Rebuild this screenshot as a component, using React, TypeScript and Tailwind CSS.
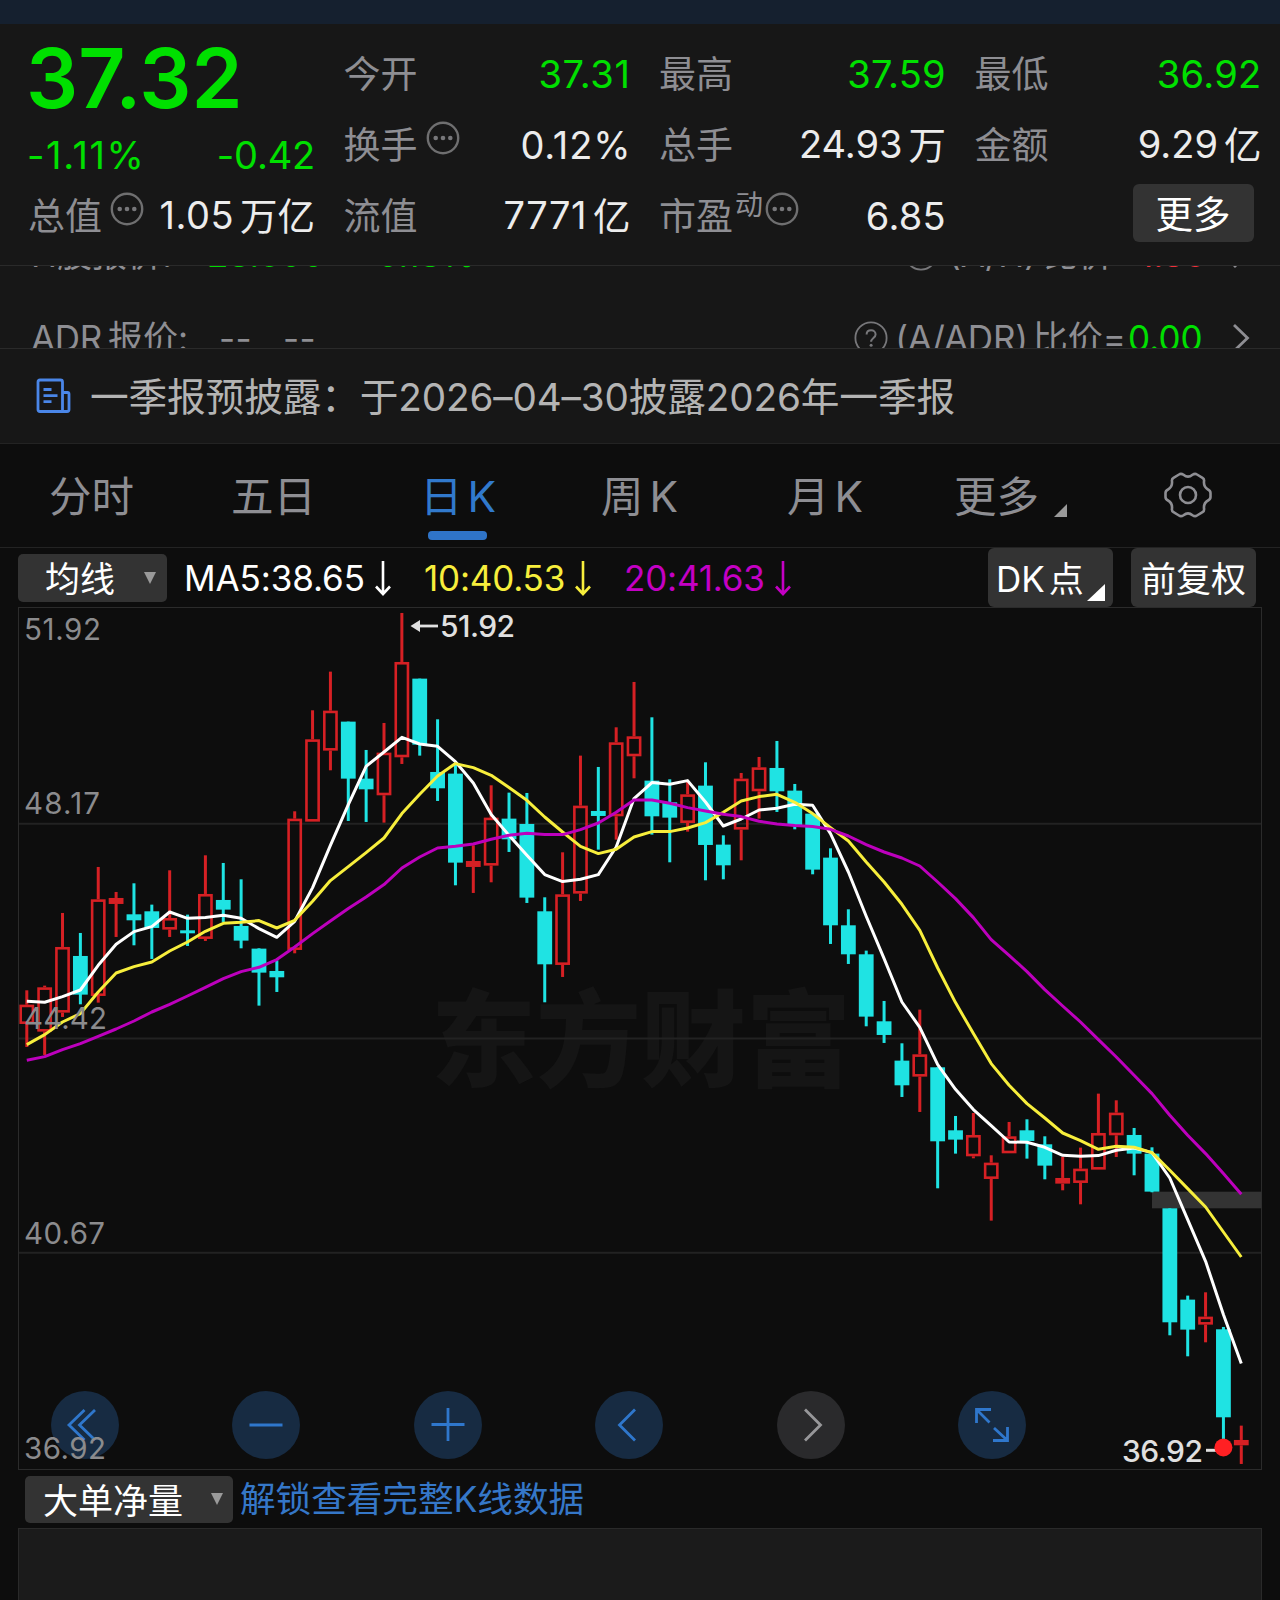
import React from "react";

type Candle = [kind: "u" | "d", high: number, top: number, bottom: number, low: number];

// Candle geometry in thirds of a pixel, measured from BASE_Y.
const CANDLES: Candle[] = [
  ["u", 1170, 1213, 1271, 1340], ["u", 1156, 1161, 1294, 1364], ["u", 938, 1040, 1237, 1250],
  ["d", 998, 1067, 1183, 1212], ["u", 800, 897, 1187, 1207], ["u", 875, 893, 911, 1010],
  ["d", 849, 942, 960, 1035], ["d", 913, 933, 983, 1076], ["u", 810, 953, 988, 1010],
  ["d", 943, 990, 999, 1037], ["u", 765, 881, 1016, 1022], ["d", 788, 899, 928, 965],
  ["d", 837, 977, 1021, 1044], ["d", 1044, 1045, 1117, 1216], ["d", 1080, 1112, 1131, 1175],
  ["u", 633, 655, 1049, 1059], ["u", 330, 417, 664, 664], ["u", 214, 331, 451, 510],
  ["d", 364, 364, 535, 662], ["d", 449, 535, 567, 665], ["u", 368, 457, 585, 667],
  ["u", 38, 185, 471, 491], ["d", 235, 235, 433, 466], ["d", 357, 515, 564, 602],
  ["d", 490, 520, 787, 855], ["u", 735, 782, 800, 878], ["u", 555, 652, 796, 846],
  ["d", 577, 655, 717, 755], ["d", 578, 671, 892, 908], ["d", 891, 933, 1092, 1206],
  ["u", 756, 882, 1094, 1130], ["u", 466, 616, 880, 902], ["d", 500, 632, 647, 748],
  ["u", 381, 426, 648, 718], ["u", 245, 408, 468, 534], ["d", 351, 541, 648, 703],
  ["d", 537, 606, 652, 786], ["u", 545, 582, 668, 694], ["d", 486, 556, 734, 840],
  ["d", 705, 733, 795, 837], ["u", 518, 535, 688, 780], ["u", 470, 501, 573, 655],
  ["d", 422, 503, 573, 635], ["d", 551, 571, 676, 687], ["d", 640, 640, 808, 822],
  ["d", 744, 772, 975, 1031], ["d", 927, 975, 1062, 1091], ["d", 1051, 1062, 1249, 1278],
  ["d", 1202, 1263, 1304, 1328], ["d", 1329, 1381, 1455, 1490], ["u", 1228, 1362, 1429, 1535],
  ["d", 1401, 1401, 1623, 1764], ["d", 1547, 1590, 1618, 1660], ["u", 1538, 1604, 1668, 1674],
  ["u", 1665, 1687, 1736, 1861], ["u", 1565, 1608, 1659, 1659], ["d", 1557, 1590, 1622, 1675],
  ["d", 1608, 1632, 1696, 1737], ["u", 1670, 1733, 1750, 1770], ["u", 1642, 1705, 1748, 1812],
  ["u", 1480, 1598, 1708, 1708], ["u", 1500, 1537, 1605, 1670], ["d", 1583, 1604, 1660, 1725],
  ["d", 1641, 1660, 1774, 1776], ["d", 1824, 1824, 2166, 2205], ["d", 2086, 2098, 2188, 2268],
  ["u", 2076, 2149, 2173, 2226], ["d", 2180, 2187, 2451, 2520], ["u", 2476, 2519, 2535, 2591],
];

const MA5 = [1203, 1206, 1189, 1169, 1095, 1032, 994, 979, 935, 954, 952, 945, 954, 985, 1011, 963, 862, 735, 613, 498, 455, 411, 431, 438, 484, 548, 643, 705, 765, 823, 844, 837, 823, 740, 595, 547, 552, 541, 605, 677, 656, 629, 624, 612, 615, 700, 815, 948, 1075, 1205, 1281, 1393, 1467, 1528, 1576, 1625, 1626, 1641, 1665, 1668, 1666, 1650, 1643, 1657, 1733, 1858, 1983, 2143, 2290];
const MA10 = [1333, 1303, 1265, 1240, 1175, 1118, 1099, 1085, 1052, 1025, 993, 969, 966, 961, 983, 960, 903, 841, 799, 757, 713, 640, 582, 527, 490, 502, 525, 562, 600, 650, 695, 738, 760, 747, 710, 694, 694, 683, 667, 636, 602, 589, 582, 606, 640, 682, 722, 785, 845, 912, 990, 1103, 1207, 1300, 1390, 1455, 1510, 1553, 1598, 1621, 1647, 1638, 1641, 1657, 1710, 1765, 1820, 1895, 1970];
const MA20 = [1380, 1369, 1348, 1330, 1308, 1286, 1262, 1235, 1212, 1187, 1161, 1135, 1114, 1101, 1078, 1040, 1000, 962, 925, 890, 853, 803, 770, 743, 738, 731, 717, 705, 699, 703, 703, 688, 668, 636, 599, 599, 609, 622, 632, 642, 649, 663, 671, 676, 679, 687, 707, 733, 755, 773, 797, 845, 895, 952, 1018, 1065, 1114, 1168, 1217, 1265, 1318, 1370, 1425, 1480, 1545, 1605, 1660, 1720, 1782];

const BASE_Y = 600.3;
const px = (i: number) => 26.8 + i * 17.86;
const py = (v: number) => BASE_Y + v / 3;
const line = (values: number[]) => values.map((v, i) => `${px(i).toFixed(1)},${py(v).toFixed(1)}`).join(" ");

function CandleMark({ c, i }: { c: Candle; i: number }) {
  const [kind, high, top, bottom, low] = c;
  const x = px(i);
  const color = kind === "u" ? "#d62024" : "#1fe3e3";
  if (kind === "d") {
    return (
      <g fill={color}>
        <rect x={x - 1.5} y={py(high)} width={3} height={(low - high) / 3} />
        <rect x={x - 7.4} y={py(top)} width={14.8} height={(bottom - top) / 3} />
      </g>
    );
  }
  const h = (bottom - top) / 3;
  return (
    <g fill={color}>
      <rect x={x - 1.5} y={py(high)} width={3} height={Math.max(0, (top - high) / 3)} />
      <rect x={x - 1.5} y={py(bottom)} width={3} height={Math.max(0, (low - bottom) / 3)} />
      {h < 6.2 ? (
        <rect x={x - 7.4} y={py(top)} width={14.8} height={h} />
      ) : (
        <rect x={x - 6.1} y={py(top) + 1.3} width={12.2} height={h - 2.6} fill="none" stroke={color} strokeWidth={2.6} />
      )}
    </g>
  );
}

function Chart() {
  return (
    <svg viewBox="18 607 1244 863" className="block h-[863px] w-[1244px]">
      <text x="431" y="1078" fontSize="105" fontWeight="900" fill="#151515" fontFamily="'Noto Sans CJK SC', sans-serif">东方财富</text>
      <g stroke="#222222" strokeWidth="2">
        <path d="M18 823.8H1262M18 1038.4H1262M18 1252.8H1262" />
      </g>
      <rect x="18.5" y="607.5" width="1243" height="862" fill="none" stroke="#2b2b2b" />
      <rect x="1152" y="1191.7" width="109.5" height="16.6" fill="#333333" />
      {CANDLES.map((c, i) => (
        <CandleMark key={i} c={c} i={i} />
      ))}
      <g fill="none" strokeWidth="3" strokeLinejoin="round">
        <polyline points={line(MA5)} stroke="#ffffff" />
        <polyline points={line(MA10)} stroke="#f7ee3c" />
        <polyline points={line(MA20)} stroke="#bd00bd" />
      </g>
      <g fill="#e0e0e0" fontFamily="Inter, sans-serif" fontSize="30" fontWeight="500">
        <text x="440" y="637" textLength="75">51.92</text>
        <text x="1122" y="1462" textLength="81">36.92</text>
      </g>
      <path d="M418 626H438" stroke="#e0e0e0" strokeWidth="2.8" />
      <path d="M410.5 626L420 620V632Z" fill="#e0e0e0" />
      <path d="M1206 1450.3H1216" stroke="#e0e0e0" strokeWidth="3" />
      <circle cx="1223.4" cy="1447.5" r="9" fill="#ff2023" />
    </svg>
  );
}

function AxisLabels() {
  return (
    <svg viewBox="18 607 1244 863" className="pointer-events-none absolute inset-0 h-[863px] w-[1244px]">
      <g fill="#8b8b8d" fontFamily="Inter, sans-serif" fontSize="29.5">
        <text x="24" y="640.4" textLength="77">51.92</text>
        <text x="24" y="813.8" textLength="76">48.17</text>
        <text x="24" y="1028.8" textLength="83">44.42</text>
        <text x="24" y="1243.8" textLength="81">40.67</text>
        <text x="24" y="1458.8" textLength="82">36.92</text>
      </g>
    </svg>
  );
}

function Dots() {
  return (
    <svg viewBox="0 0 34 34" className="size-[34px] shrink-0" fill="none" stroke="#6f6f70" strokeWidth="2.4">
      <circle cx="17" cy="17" r="15.2" />
      <g fill="#77777a" stroke="none">
        <circle cx="9.7" cy="17" r="2.3" />
        <circle cx="17" cy="17" r="2.3" />
        <circle cx="24.3" cy="17" r="2.3" />
      </g>
    </svg>
  );
}

function Row({ label, extra, children, green }: { label: string; extra?: React.ReactNode; children?: React.ReactNode; green?: boolean }) {
  return (
    <div className="flex h-[71px] items-center justify-between whitespace-nowrap">
      <div className="flex items-center text-[37px] text-[#8e8e93]">
        <span className="pt-[2px]">{label}</span>
        {extra}
      </div>
      <div className={green ? "-mr-[1px] text-[38px] tracking-[0.3px] text-[#00e000]" : "-mr-[1px] text-[38px] text-[#ececec]"}>{children}</div>
    </div>
  );
}

function Unit({ children }: { children: React.ReactNode }) {
  return <span className="relative top-px ml-[6px] text-[37.500px] tracking-normal">{children}</span>;
}

function Question() {
  return (
    <svg viewBox="0 0 34 34" className="size-[34px]" fill="none" stroke="#77777a" strokeWidth="1.8">
      <circle cx="17" cy="17" r="15.6" />
      <path d="M12.6 13.6c0-2.6 1.900-4.300 4.500-4.300s4.500 1.700 4.500 4.100c0 3.400-4.500 3.700-4.500 7.400" strokeWidth="2" />
      <circle cx="17.100" cy="24.300" r="1.500" fill="#77777a" stroke="none" />
    </svg>
  );
}

function Chevron() {
  return (
    <svg viewBox="0 0 18 30" className="h-[30px] w-[18px]" fill="none" stroke="#8e8e93" strokeWidth="2.8">
      <path d="M2 2L15.500 15L2 28" />
    </svg>
  );
}

function Down() {
  return (
    <svg viewBox="0 0 16 36" className="h-[36px] w-[16px]" fill="none" stroke="currentColor" strokeWidth="2.6">
      <path d="M8 1V34M1 26.500L8 34L15 26.500" />
    </svg>
  );
}

function Caret() {
  return (
    <svg viewBox="0 0 12 12" className="size-3" fill="#9a9a9a">
      <path d="M0 0H12L6 12Z" />
    </svg>
  );
}

function RoundButton({ muted, children }: { muted?: boolean; children: React.ReactNode }) {
  return (
    <div className={muted ? "flex size-[68px] items-center justify-center rounded-full bg-[#2a2a2c] text-[#97979a]" : "flex size-[68px] items-center justify-center rounded-full bg-[#172b42] text-[#2f77cc]"}>
      <svg viewBox="0 0 68 68" className="size-[68px]" fill="none" stroke="currentColor" strokeWidth="2.8">
        {children}
      </svg>
    </div>
  );
}

export default function App() {
  return (
    <div className="h-[1600px] w-[1280px] overflow-hidden bg-[#0d0d0d] font-[Inter,'Noto_Sans_CJK_SC',sans-serif] leading-none">
      <div className="h-6 bg-[#15202f]" />

      <header className="flex h-[241px] gap-[29.500px] bg-[#171717] pl-[28px] pt-[14px]">
        <div className="w-[286px]">
          <div className="-ml-[2px] flex h-[80px] items-center pt-[2px] text-[82px] font-semibold text-[#00e000]">37.32</div>
          <div className="flex h-[62px] items-center justify-between pt-[11px] text-[38px] text-[#00e000]">
            <span className="-ml-px tracking-[1.600px]">-1.11%</span>
            <span className="-mr-px tracking-[-0.200px]">-0.42</span>
          </div>
          <Row label="总值" extra={<span className="-mt-[14px] ml-[8px]"><Dots /></span>}><span className="tracking-[0.500px]">1.05</span><Unit>万亿</Unit></Row>
        </div>
        <div className="w-[286px]">
          <Row label="今开" green><span className="tracking-[0.600px]">37.31</span></Row>
          <Row label="换手" extra={<span className="-mt-[14px] ml-[8px]"><Dots /></span>}><span className="-mr-px tracking-[0.900px]">0.12%</span></Row>
          <Row label="流值"><span className="tracking-[0.500px]">7771</span><Unit>亿</Unit></Row>
        </div>
        <div className="w-[286px]">
          <Row label="最高" green>37.59</Row>
          <Row label="总手">24.93<Unit>万</Unit></Row>
          <Row
            label="市盈"
            extra={
              <span className="-mt-[14px] ml-[2px] flex items-center gap-[2px]">
                <span className="-mt-[8px] text-[28px]">动</span>
                <Dots />
              </span>
            }
          >
            <span className="tracking-[0.300px]">6.85</span>
          </Row>
        </div>
        <div className="w-[286px]">
          <Row label="最低" green>36.92</Row>
          <Row label="金额">9.29<Unit>亿</Unit></Row>
          <div className="flex h-[71px] items-center justify-end pb-[6px] pr-[7px]">
            <button className="flex h-[58px] w-[121px] items-center justify-center rounded-[6px] bg-[#333333] pt-[4px] text-[37.500px] text-white">更多</button>
          </div>
        </div>
      </header>

      <section className="h-[84px] overflow-hidden border-y border-[#2a2a2a] bg-[#171717] text-[35px] text-[#8e8e93]">
        <div className="-mt-[54px] flex h-[84px] items-center justify-between pl-[31px] pr-[30px]">
          <div className="flex whitespace-pre">
            <span className="w-[176px]">H股报价:</span>
            <span className="w-[154px] text-[#00d800]">28.600</span>
            <span className="text-[#00d800]">-0.18%</span>
          </div>
          <div className="flex items-center">
            <Question />
            <span className="ml-[10px]">(A/H)<span className="ml-[6px]">比价</span></span>
            <span className="w-[26px] overflow-hidden pl-[2px]">=</span>
            <span className="w-[93px] text-[#f0303a]">1.36</span>
            <Chevron />
          </div>
        </div>
        <div className="flex h-[84px] items-center justify-between pl-[31px] pr-[30px]">
          <div className="flex whitespace-pre">
            <span className="w-[188px]"><span className="tracking-[-0.300px]">ADR</span><span className="ml-[6px]">报价</span>:</span>
            <span className="w-[64px] tracking-[0.5px]">--</span>
            <span className="tracking-[0.5px]">--</span>
          </div>
          <div className="flex items-center">
            <Question />
            <span className="ml-[7px] tracking-[-0.200px]">(A/ADR)</span>
            <span className="ml-[5px]">比价</span>
            <span className="pr-[2px]">=</span>
            <span className="w-[104px] text-[#00e000]">0.00</span>
            <Chevron />
          </div>
        </div>
      </section>

      <section className="flex h-[95px] items-center border-b border-[#232323] bg-[#171717] pl-[36px]">
        <svg viewBox="0 0 36 36" className="size-[36px]" fill="none" stroke="#4a86e8" strokeWidth="2.800">
          <path d="M26.500 33.500H4Q2 33.500 2 31.500V4Q2 2 4 2H24.500Q26.500 2 26.500 4V33.500H31Q33 33.500 33 31.500V16Q33 14.500 31.500 14.500H26.500" />
          <path d="M7.500 11.500H15.500M7.500 17.700H21.500M7.500 23.700H15.500" />
        </svg>
        <span className="ml-[18px] whitespace-nowrap pt-[2px] text-[38.700px] tracking-[-0.150px] text-[#b4b4b4]">一季报预披露：于2026–04–30披露2026年一季报</span>
      </section>

      <nav className="flex h-[104px] items-center border-b border-[#232323] pt-[4px] text-[42.500px] text-[#8e8e93]">
        <div className="w-[182px] pl-[49px]">分时</div>
        <div className="w-[238px] pl-[49px]">五日</div>
        <div className="relative w-[180px] text-[#3179cc]">
          日<span className="ml-[5px]">K</span>
          <span className="absolute -bottom-[21px] left-[8px] h-[9px] w-[59px] rounded-[4px] bg-[#2f74c8]" />
        </div>
        <div className="w-[186px] pl-px">周<span className="ml-[6px]">K</span></div>
        <div className="w-[168px] pl-px">月<span className="ml-[5px]">K</span></div>
        <div className="flex w-[210px] items-end">
          更多
          <svg viewBox="0 0 13 13" className="mb-[2px] ml-[15px] size-[13px]" fill="#9a9a9a"><path d="M13 0V13H0Z" /></svg>
        </div>
        <svg viewBox="0 0 48 46" className="-mt-[5px] h-[46px] w-[48px]" fill="none" stroke="#8e8e93" strokeWidth="2.600" strokeLinejoin="round">
          <path d="M15 2.500Q17 1 19.500 2.800Q24 6.500 28.500 2.800Q31 1 33 2.500L38.500 5.800Q40.500 7 40 9.500Q39.500 15 44 17.500Q46.500 18.800 46.500 21V25Q46.500 27.200 44 28.500Q39.500 31 40 36.500Q40.500 39 38.500 40.200L33 43.500Q31 45 28.500 43.200Q24 39.500 19.500 43.200Q17 45 15 43.500L9.500 40.200Q7.500 39 8 36.500Q8.500 31 4 28.500Q1.500 27.200 1.500 25V21Q1.500 18.800 4 17.500Q8.500 15 8 9.500Q7.500 7 9.500 5.800Z" />
          <circle cx="24" cy="23" r="8" />
        </svg>
      </nav>

      <div className="flex h-[59px] items-center pl-[18px] pr-[24px] text-[35px] text-white">
        <div className="flex h-[48px] w-[149px] items-center justify-between rounded-[5px] bg-[#333333] pl-[27px] pr-[11px]">
          <span className="pt-[4px]">均线</span>
          <Caret />
        </div>
        <div className="flex w-[241px] items-center pl-[17px]"><span className="w-[191px] pt-[2px] tracking-[-0.100px]">MA5:38.65</span><Down /></div>
        <div className="flex w-[200px] items-center pl-[16px] text-[#f7ee3c]"><span className="w-[151px] pt-[2px] tracking-[-0.200px]">10:40.53</span><Down /></div>
        <div className="flex items-center pl-[16px] text-[#c400c4]"><span className="w-[151px] pt-[2px] tracking-[-0.200px]">20:41.63</span><Down /></div>
        <div className="relative ml-auto flex h-[59px] w-[125px] items-center rounded-[6px] bg-[#333333] pl-[8px] pt-[3px]">
          DK<span className="ml-[4px]">点</span>
          <svg viewBox="0 0 18 17" className="absolute bottom-[6px] right-[8px] h-[17px] w-[18px]" fill="white"><path d="M18 0V17H0Z" /></svg>
        </div>
        <div className="ml-[18px] flex h-[59px] w-[125px] items-center justify-center rounded-[6px] bg-[#333333] pt-[4px]">前复权</div>
      </div>

      <div className="relative ml-[18px] w-[1244px]">
        <Chart />
        <div className="absolute bottom-[11px] left-[32.500px] flex gap-[113.600px]">
          <RoundButton><path d="M33.500 19L18 34L33.500 49M44 19L28.500 34L44 49" /></RoundButton>
          <RoundButton><path d="M17.500 34H50.500" /></RoundButton>
          <RoundButton><path d="M17.500 33.500H50.500M34 17V50" /></RoundButton>
          <RoundButton><path d="M40 18.500L24.500 34L40 49.500" /></RoundButton>
          <RoundButton muted><path d="M28 18.500L43.500 34L28 49.500" /></RoundButton>
          <RoundButton><path d="M18.500 32V18.500H33M18.500 18.500L31.500 31.500M36 37L49.500 49.500M49.500 36V49.500H35" /></RoundButton>
        </div>
        <AxisLabels />
      </div>

      <div className="flex h-[58px] items-center pl-[25px]">
        <div className="flex h-[47px] w-[208px] items-center justify-between rounded-[5px] bg-[#333333] pl-[18px] pr-[10px] text-[35px] text-white">
          <span className="pt-[4px]">大单净量</span>
          <Caret />
        </div>
        <span className="ml-[7px] pt-[2px] text-[35.600px] text-[#3577c8]">解锁查看完整K线数据</span>
      </div>
      <div className="ml-[18px] h-[73px] w-[1244px] border border-b-0 border-[#2a2a2a] bg-[#1b1b1b]" />
    </div>
  );
}
